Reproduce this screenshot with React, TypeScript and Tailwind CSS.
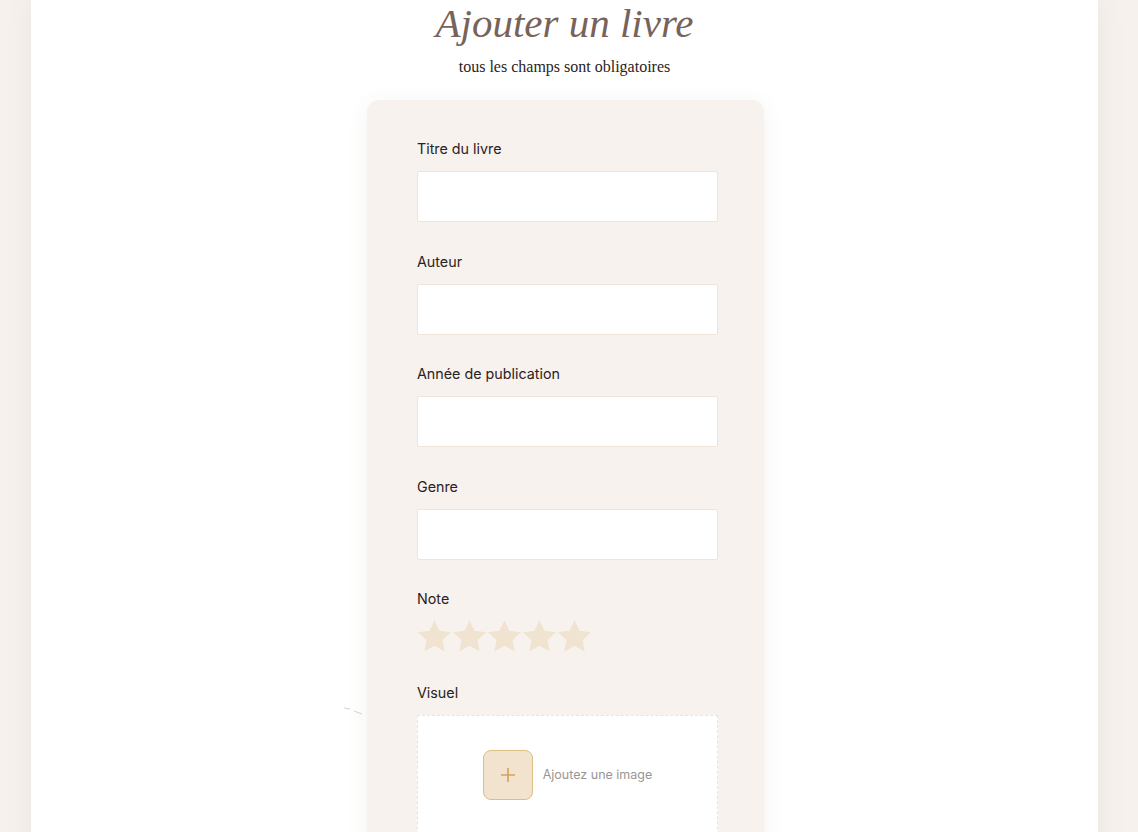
import React from "react";

const fields = ["Titre du livre", "Auteur", "Année de publication", "Genre"];

function Star() {
  return (
    <svg viewBox="0 0 24 24" className="h-[35px] w-[35px]" fill="#f0e4d0">
      <path d="M12 0.8l3.4 7.2 7.9 1-5.8 5.4 1.5 7.8L12 18.4l-7 3.8 1.5-7.8L0.7 9l7.9-1z" />
    </svg>
  );
}

export default function App() {
  return (
    <div className="min-h-screen bg-[#f6f1ed] pl-[31px] pr-[40px]">
      <div className="relative min-h-[832px] bg-white shadow-[0_0_28px_rgba(120,90,60,0.08)] pt-[1px]">
        {/* titre */}
        <h1
          className="text-center text-[41px] italic leading-[44px] text-[#77635a]"
          style={{ fontFamily: '"Liberation Serif", "DejaVu Serif", serif' }}
        >
          Ajouter un livre
        </h1>
        <p
          className="mt-[12px] text-center text-[16px] leading-[20px] text-[#2b2320]"
          style={{ fontFamily: '"Liberation Serif", "DejaVu Serif", serif' }}
        >
          tous les champs sont obligatoires
        </p>

        {/* petit trait décoratif */}
        <svg className="absolute left-[313px] top-[706px]" width="20" height="10" viewBox="0 0 20 10">
          <path d="M0 2 L6 3 M10 5 L18 8" stroke="#d8d2cc" strokeWidth="1" fill="none" />
        </svg>

        <div className="mt-[23px] flex justify-center">
          <form
            className="ml-[2px] w-[397px] rounded-[12px] bg-[#f7f2ee] pl-[50px] pr-[46px] pt-[39px] pb-[40px] shadow-[0_4px_22px_rgba(110,80,50,0.07)]"
            style={{ fontFamily: 'Inter, "Open Sans", sans-serif' }}
          >
            {fields.map((label) => (
              <div key={label} className="mb-[29.5px]">
                <label className="block text-[14.3px] leading-[20px] text-[#2a2220]">{label}</label>
                <input
                  type="text"
                  className="mt-[12px] block h-[51px] w-full rounded-[2px] border border-[#f0e4d6] bg-white outline-none"
                />
              </div>
            ))}

            <div className="mb-[29px]">
              <label className="block text-[14.3px] leading-[20px] text-[#2a2220]">Note</label>
              <div className="mt-[10px] flex">
                <Star />
                <Star />
                <Star />
                <Star />
                <Star />
              </div>
            </div>

            <div>
              <label className="block text-[14.3px] leading-[20px] text-[#2a2220]">Visuel</label>
              <div className="mt-[12px] flex h-[150px] items-start justify-center border border-dashed border-[#ece2d7] bg-white pt-[34px]">
                <div className="flex items-center gap-[10px]">
                  <div className="flex h-[50px] w-[50px] items-center justify-center rounded-[8px] border border-[#dfbd86] bg-[#f1e3cd]">
                    <svg width="16" height="16" viewBox="0 0 16 16">
                      <path d="M8 1v14M1 8h14" stroke="#d3a25c" strokeWidth="1.6" />
                    </svg>
                  </div>
                  <span className="text-[12.5px] text-[#9a9592]">Ajoutez une image</span>
                </div>
              </div>
            </div>
          </form>
        </div>
      </div>
    </div>
  );
}
